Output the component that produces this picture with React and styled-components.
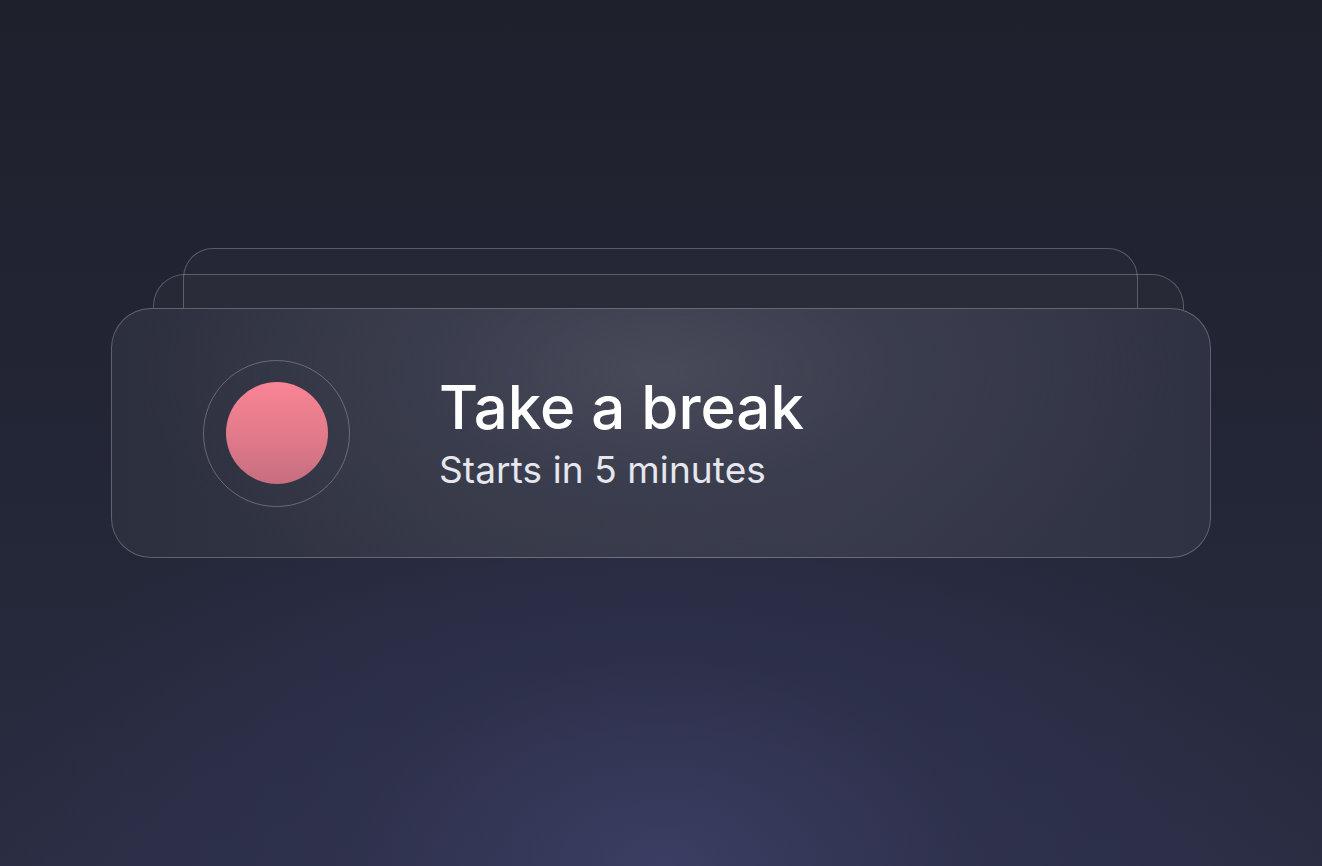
import React from "react";
import styled, { createGlobalStyle } from "styled-components";

const Global = createGlobalStyle`
  html, body { margin: 0; padding: 0; height: 100%; }
  body {
    font-family: Inter, "Noto Sans", sans-serif;
    background-color: #1f212d;
    background-image:
      radial-gradient(ellipse 680px 460px at 50% 100%, rgba(62, 64, 104, 0.85) 0%, rgba(52, 54, 88, 0.5) 45%, rgba(31, 33, 45, 0) 100%),
      linear-gradient(180deg, #1e202c 0%, #232636 55%, #2a2d42 100%);
    overflow: hidden;
  }
`;

const Page = styled.main`
  width: 1322px;
  height: 866px;
  display: flex;
  align-items: center;
  justify-content: center;
`;

const Stack = styled.div`
  position: relative;
  width: 1100px;
`;

const GhostCard = styled.div`
  position: absolute;
  top: ${(p) => p.$top}px;
  left: ${(p) => p.$left}px;
  right: ${(p) => p.$right}px;
  height: ${(p) => p.$height}px;
  border: 1.5px solid rgba(255, 255, 255, 0.24);
  border-bottom: none;
  border-radius: ${(p) => p.$radius}px ${(p) => p.$radius}px 0 0;
  background: ${(p) => p.$bg};
  box-sizing: border-box;
`;

const Card = styled.section`
  position: relative;
  height: 250px;
  box-sizing: border-box;
  border-radius: 40px;
  border: 1.5px solid rgba(255, 255, 255, 0.24);
  background:
    radial-gradient(ellipse 520px 260px at 50% 25%, rgba(72, 74, 90, 1) 0%, rgba(60, 63, 79, 0.7) 45%, rgba(46, 49, 63, 0) 100%),
    linear-gradient(90deg, #2c2f3d 0%, #353847 35%, #363949 65%, #2f3242 100%);
  display: flex;
  align-items: center;
  padding-left: 91px;
  gap: 89px;
`;

const Ring = styled.div`
  width: 147px;
  height: 147px;
  border-radius: 50%;
  border: 1.5px solid rgba(255, 255, 255, 0.26);
  box-sizing: border-box;
  display: flex;
  align-items: center;
  justify-content: center;
  flex-shrink: 0;
`;

const Dot = styled.div`
  width: 102px;
  height: 102px;
  border-radius: 50%;
  background: linear-gradient(180deg, #f98494 0%, #e07a8a 55%, #c66e80 100%);
`;

const Texts = styled.div`
  display: flex;
  flex-direction: column;
  gap: 9px;
  margin-top: -2px;
`;

const Title = styled.h1`
  margin: 0;
  font-family: Inter, sans-serif;
  font-weight: 500;
  font-size: 60px;
  line-height: 66px;
  letter-spacing: 0;
  color: #ffffff;
`;

const Subtitle = styled.p`
  margin: 0;
  font-family: Inter, sans-serif;
  font-weight: 400;
  font-size: 37px;
  line-height: 42px;
  letter-spacing: 0.1px;
  color: #e6e7ee;
`;

export default function App() {
  return (
    <>
      <Global />
      <Page>
        <Stack>
          <GhostCard $top={-60} $left={72} $right={73} $height={62} $radius={30} $bg="rgba(40, 42, 56, 0.6)" />
          <GhostCard $top={-34} $left={42} $right={27} $height={36} $radius={32} $bg="rgba(255, 255, 255, 0.025)" />
          <Card>
            <Ring>
              <Dot />
            </Ring>
            <Texts>
              <Title>Take a break</Title>
              <Subtitle>Starts in 5 minutes</Subtitle>
            </Texts>
          </Card>
        </Stack>
      </Page>
    </>
  );
}
